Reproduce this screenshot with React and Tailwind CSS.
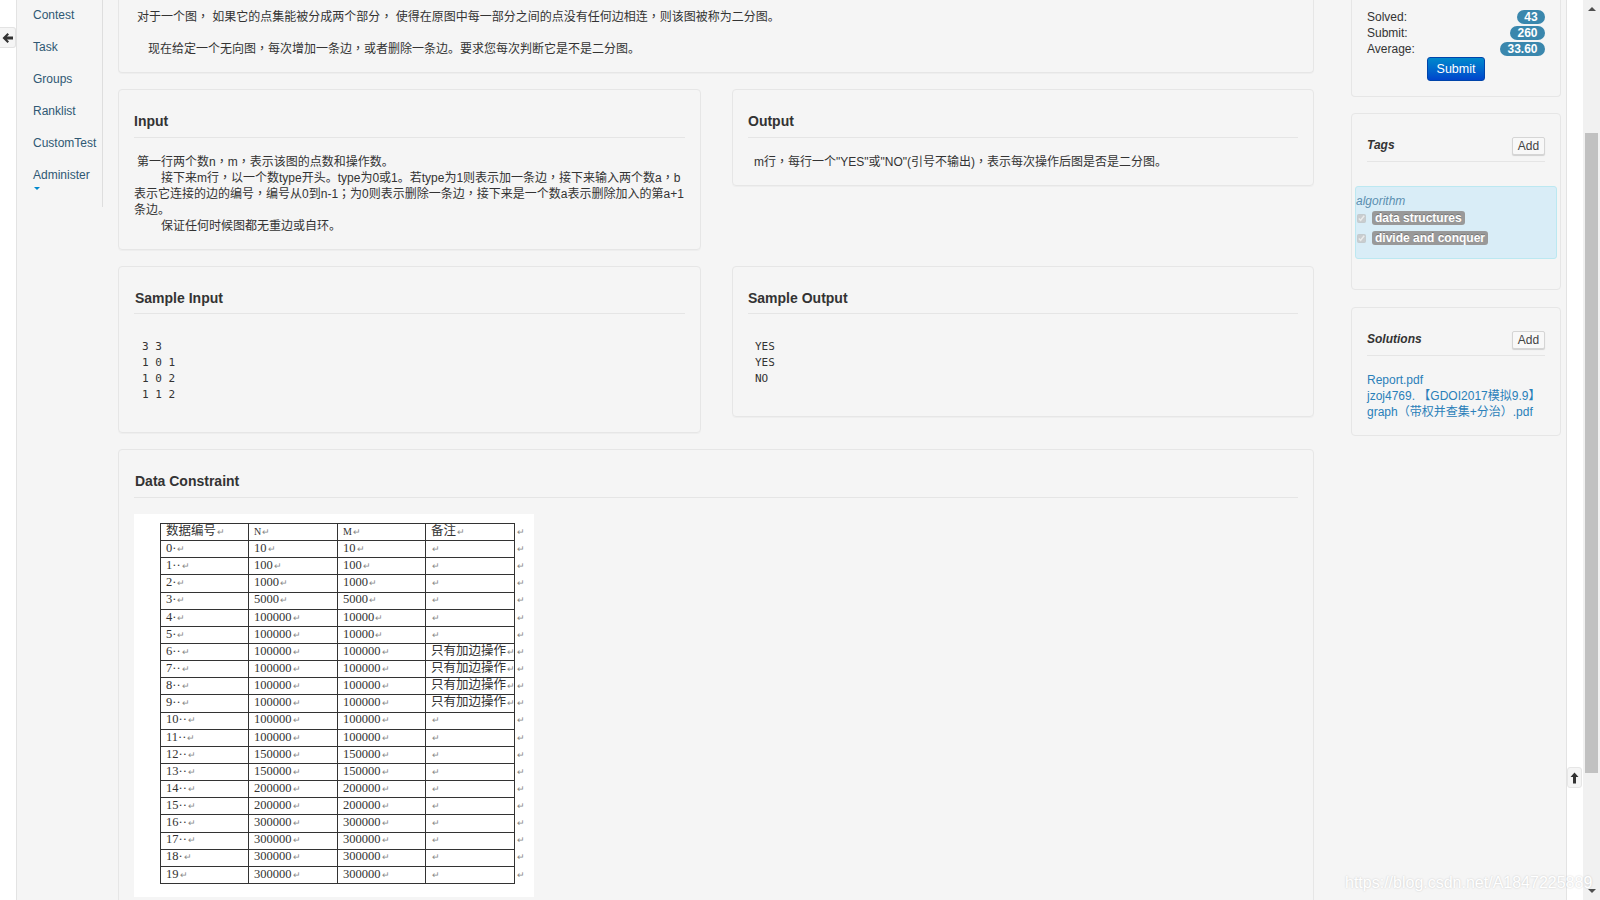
const sans = { fontFamily: '"Liberation Sans", "Noto Sans CJK SC", sans-serif' };

const navItems = ['Contest', 'Task', 'Groups', 'Ranklist', 'CustomTest', 'Administer'];

const rows = [
    ['0·', '10', '10', ''],
    ['1··', '100', '100', ''],
    ['2·', '1000', '1000', ''],
    ['3·', '5000', '5000', ''],
    ['4·', '100000', '10000', ''],
    ['5·', '100000', '10000', ''],
    ['6··', '100000', '100000', '只有加边操作'],
    ['7··', '100000', '100000', '只有加边操作'],
    ['8··', '100000', '100000', '只有加边操作'],
    ['9··', '100000', '100000', '只有加边操作'],
    ['10··', '100000', '100000', ''],
    ['11··', '100000', '100000', ''],
    ['12··', '150000', '150000', ''],
    ['13··', '150000', '150000', ''],
    ['14··', '200000', '200000', ''],
    ['15··', '200000', '200000', ''],
    ['16··', '300000', '300000', ''],
    ['17··', '300000', '300000', ''],
    ['18·', '300000', '300000', ''],
    ['19', '300000', '300000', ''],
];

// fullwidth punctuation sits centered in the cell in the reference, the TC font does that
function Zh({ text }) {
    return text.split(/([，；（）])/).map((part, i) =>
        /^[，；（）]$/.test(part)
            ? <span key={i} className="leading-[0]" style={{ fontFamily: '"Noto Sans CJK TC", sans-serif' }}>{part}</span>
            : part
    );
}

function Mark() {
    return <span className="text-[9px] text-[#888] ml-[1px]">↵</span>;
}

function Card({ title, titleClass = 'pb-[6px]', className = '', children }) {
    return (
        <div className={`border border-[#e6e6e6] rounded-[4px] shadow-[0_1px_1px_rgba(0,0,0,0.03)] px-[15px] ${className}`}>
            {title && (
                <h3 className={`text-[14px] leading-[20px] font-bold text-[#333] pt-[21px] border-b border-[#e5e5e5] ${titleClass}`}>{title}</h3>
            )}
            {children}
        </div>
    );
}

function Sample({ lines, className }) {
    return (
        <pre className={`text-[11px] leading-[16px] text-[#333] ${className}`} style={{ fontFamily: '"DejaVu Sans Mono", monospace' }}>
            {lines.join('\n')}
        </pre>
    );
}

function SideHead({ title }) {
    return (
        <div className="flex justify-between items-center pt-[23px] pb-[6px] border-b border-[#e5e5e5]">
            <span className="text-[12px] leading-[16px] mb-[2px] font-bold italic text-[#333]">{title}</span>
            <button className="w-[33px] h-[18px] bg-[#f8f8f8] border border-[#d5d5d5] rounded-[2px] shadow-[0_1px_1px_rgba(0,0,0,0.15)] text-[12px] leading-[14px] text-[#444]">Add</button>
        </div>
    );
}

function Stat({ label, value, width }) {
    return (
        <div className="flex justify-between items-center h-[16px]">
            <span className="text-[12px] text-[#333]">{label}</span>
            <span className={`${width} h-[14px] rounded-[7px] bg-[#3a87ad] text-white text-[12px] leading-[14px] font-bold text-center`}>{value}</span>
        </div>
    );
}

function Tag({ text, width }) {
    return (
        <div className="flex items-center h-[20px]">
            <input type="checkbox" checked disabled readOnly className="w-[9px] h-[9px] ml-[1px] mr-[6px] accent-[#999]" />
            <span className={`${width} h-[14px] bg-[#999] rounded-[3px] text-white text-[12px] leading-[14px] font-bold pl-[3px] whitespace-nowrap [text-shadow:0_-1px_0_rgba(0,0,0,0.25)]`}>{text}</span>
        </div>
    );
}

function ConstraintTable() {
    const cell = 'border border-[#333] pl-[5px] pt-0 pb-[2px] leading-none whitespace-nowrap overflow-visible';
    return (
        <div className="w-[400px] h-[383px] bg-white pl-[26px] pt-[9px] overflow-hidden">
            <table className="table-fixed w-[360px] h-[361px] border-collapse text-[12.5px] text-[#333]" style={{ fontFamily: '"Liberation Serif", "Noto Sans CJK SC", serif' }}>
                <colgroup>
                    <col className="w-[88px]" />
                    <col className="w-[89px]" />
                    <col className="w-[88px]" />
                    <col className="w-[89px]" />
                    <col className="w-[6px]" />
                </colgroup>
                <tbody>
                    <tr>
                        <td className={cell}>数据编号<Mark /></td>
                        <td className={cell}><span className="text-[10px]">N</span><Mark /></td>
                        <td className={cell}><span className="text-[10px]">M</span><Mark /></td>
                        <td className={cell}>备注<Mark /></td>
                        <td className="pl-[1px] pb-[2px] leading-none"><Mark /></td>
                    </tr>
                    {rows.map((r) => (
                        <tr key={r[0]}>
                            <td className={cell}>{r[0]}<Mark /></td>
                            <td className={cell}>{r[1]}<Mark /></td>
                            <td className={cell}>{r[2]}<Mark /></td>
                            <td className={cell}>{r[3]}<Mark /></td>
                            <td className="pl-[1px] pb-[2px] leading-none"><Mark /></td>
                        </tr>
                    ))}
                </tbody>
            </table>
        </div>
    );
}

export default function App() {
    return (
        <div className="relative flex h-screen overflow-hidden bg-white text-[12px] text-[#333]" style={sans}>
            {/* left strip with collapse button */}
            <div className="w-[16px] shrink-0 pt-[27px]">
                <div className="w-[16px] h-[21px] bg-[#f5f5f5] border border-l-0 border-[#e3e3e3] rounded-r-[3px] flex items-center justify-center">
                    <svg width="11" height="10" viewBox="0 0 11 10"><path d="M5.5 0 L7 1.5 L5 3.5 H11 V6.5 H5 L7 8.5 L5.5 10 L0.5 5 Z" fill="#333" /></svg>
                </div>
            </div>

            {/* page */}
            <div className="flex-1 flex bg-[#f5f5f5] border-x border-[#e3e3e3] min-w-0">
                <nav className="w-[86px] h-[207px] shrink-0 border-r border-[#dedede] pl-[16px] pt-[7px]">
                    {navItems.map((n) => (
                        <div key={n} className="h-[32px] leading-[16px] text-[#2f5873]">{n}</div>
                    ))}
                    <div className="w-0 h-0 -mt-[12px] ml-[1px] border-x-[3.5px] border-t-[3px] border-x-transparent border-t-[#0088cc]" />
                </nav>

                {/* main column */}
                <div className="w-[1196px] ml-[15px] shrink-0">
                    <div className="h-[73px] border border-t-0 border-[#e6e6e6] rounded-b-[4px] shadow-[0_1px_1px_rgba(0,0,0,0.03)] pl-[18px] pt-[9px] leading-[16px]">
                        <p className="whitespace-pre"><Zh text="对于一个图， 如果它的点集能被分成两个部分， 使得在原图中每一部分之间的点没有任何边相连，则该图被称为二分图。" /></p>
                        <p className="mt-[16px] pl-[11px] whitespace-pre"><Zh text="现在给定一个无向图，每次增加一条边，或者删除一条边。要求您每次判断它是不是二分图。" /></p>
                    </div>

                    <div className="grid grid-cols-[583px_582px] gap-x-[31px] items-start mt-[16px]">
                        <Card title="Input" className="h-[161px]">
                            <div className="pt-[16px] leading-[16px]">
                                <p className="pl-[3px]"><Zh text="第一行两个数n，m，表示该图的点数和操作数。" /></p>
                                <p className="indent-[27px]"><Zh text="接下来m行，以一个数type开头。type为0或1。若type为1则表示加一条边，接下来输入两个数a，b表示它连接的边的编号，编号从0到n-1；为0则表示删除一条边，接下来是一个数a表示删除加入的第a+1条边。" /></p>
                                <p className="indent-[27px]">保证任何时候图都无重边或自环。</p>
                            </div>
                        </Card>
                        <Card title="Output" className="h-[97px]">
                            <p className="pt-[16px] pl-[6px] leading-[16px]"><Zh text={'m行，每行一个"YES"或"NO"(引号不输出)，表示每次操作后图是否是二分图。'} /></p>
                        </Card>
                    </div>

                    <div className="grid grid-cols-[583px_582px] gap-x-[31px] items-start mt-[16px]">
                        <Card title="Sample Input" titleClass="pb-[5px] pl-[1px]" className="h-[167px]">
                            <Sample lines={['3 3', '1 0 1', '1 0 2', '1 1 2']} className="pt-[25px] pl-[8px]" />
                        </Card>
                        <Card title="Sample Output" titleClass="pb-[5px]" className="h-[151px]">
                            <Sample lines={['YES', 'YES', 'NO']} className="pt-[25px] pl-[7px]" />
                        </Card>
                    </div>

                    <Card title="Data Constraint" titleClass="pb-[6px] pl-[1px]" className="mt-[16px] h-[470px]">
                        <div className="pt-[16px]">
                            <ConstraintTable />
                        </div>
                    </Card>
                </div>

                {/* right column */}
                <div className="w-[210px] ml-[37px] shrink-0 flex flex-col">
                    <div className="h-[97px] border border-t-0 border-[#e6e6e6] rounded-b-[4px] px-[15px] pt-[9px]">
                        <Stat label="Solved:" value="43" width="w-[28px]" />
                        <Stat label="Submit:" value="260" width="w-[35px]" />
                        <Stat label="Average:" value="33.60" width="w-[45px]" />
                        <button className="block mx-auto w-[58px] h-[24px] rounded-[3px] border border-[#0044aa] bg-gradient-to-b from-[#0088cc] to-[#0044cc] text-white text-[12.5px] leading-[20px]">Submit</button>
                    </div>

                    <div className="mt-[16px] h-[177px] border border-[#e6e6e6] rounded-[4px] px-[3px]">
                        <div className="px-[12px]">
                            <SideHead title="Tags" />
                        </div>
                        <div className="mt-[24px] h-[73px] bg-[#d9edf7] border border-[#bce8f1] rounded-[3px] pt-[7px]">
                            <div className="leading-[14px] italic text-[#5b8fb0]">algorithm</div>
                            <Tag text="data structures" width="w-[93px]" />
                            <Tag text="divide and conquer" width="w-[116px]" />
                        </div>
                    </div>

                    <div className="mt-[17px] h-[129px] border border-[#e6e6e6] rounded-[4px] px-[15px]">
                        <SideHead title="Solutions" />
                        <div className="pt-[16px] leading-[16px] text-[#2a80b9]">
                            <div>Report.pdf</div>
                            <div className="whitespace-nowrap">jzoj4769. 【GDOI2017模拟9.9】</div>
                            <div className="whitespace-nowrap"><Zh text="graph（带权并查集+分治）.pdf" /></div>
                        </div>
                    </div>
                </div>
            </div>

            {/* right strip */}
            <div className="w-[16px] shrink-0 pt-[767px]">
                <div className="w-[15px] h-[21px] bg-[#f5f5f5] border border-[#e6e6e6] rounded-[3px] flex items-center justify-center">
                    <svg width="9" height="12" viewBox="0 0 9 12"><path d="M4.5 0.5 L8.5 5 H6 V11.5 H3 V5 H0.5 Z" fill="#333" /></svg>
                </div>
            </div>

            {/* browser scrollbar */}
            <div className="w-[17px] shrink-0 bg-[#f1f1f1] flex flex-col items-center">
                <div className="w-0 h-0 mt-[7px] border-x-[4px] border-b-[4px] border-x-transparent border-b-[#505050]" />
                <div className="w-[13px] h-[640px] mt-[122px] bg-[#c1c1c1]" />
                <div className="w-0 h-0 mt-[116px] border-x-[4px] border-t-[4px] border-x-transparent border-t-[#505050]" />
            </div>

            {/* watermark */}
            <div className="absolute left-[1345px] top-[873px] text-[16px] leading-[20px] text-white whitespace-nowrap [text-shadow:0_0_2px_rgba(0,0,0,0.2)]">
                https://blog.csdn.net/A1847225889
            </div>
        </div>
    );
}
